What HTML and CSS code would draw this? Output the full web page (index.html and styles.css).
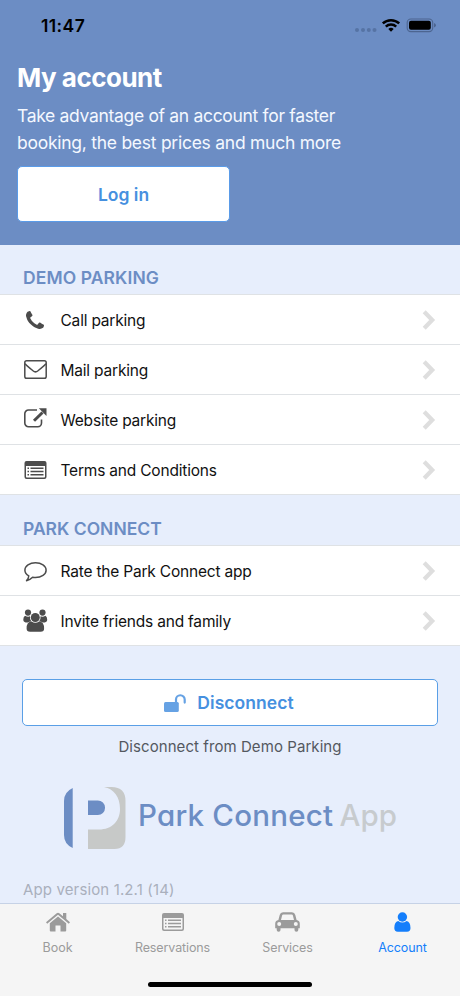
FILE: index.html
```html
<!DOCTYPE html>
<html lang="en">
<head>
<meta charset="utf-8">
<title>My account</title>
<link rel="stylesheet" href="styles.css">
</head>
<body>
<svg width="0" height="0" class="defs">
  <defs>
    <symbol id="chevron" viewBox="0 0 14 20"><path d="M2.200 1.800l8 8.200-8 8.200" fill="none" stroke="currentColor" stroke-width="4.200"/></symbol>
    <symbol id="list" viewBox="0 0 22 18"><path fill="currentColor" fill-rule="evenodd" d="M2 0h18a2 2 0 0 1 2 2v14a2 2 0 0 1-2 2H2a2 2 0 0 1-2-2V2a2 2 0 0 1 2-2zM1.500 5v10.700q0 .8.800.8h17.400q.8 0 .8-.8V5z"/><path d="M3 7.300h1.500M3 10.500h1.500M3 13.700h1.500M6 7.300h13M6 10.500h13M6 13.700h13" stroke="currentColor" stroke-width="1.500"/></symbol>
  </defs>
</svg>
<div class="screen">
  <header class="hero">
    <div class="status">
      <span class="time">11:47</span>
      <svg class="indicators" width="84" height="18" viewBox="0 0 84 18">
        <g fill="#5673a4"><circle cx="3" cy="13" r="2"/><circle cx="9" cy="13" r="2"/><circle cx="14.800" cy="13" r="2"/><circle cx="20.500" cy="13" r="2"/></g>
        <g fill="none" stroke="#000" stroke-width="2.500"><path d="M28.800 6.400a12 12 0 0 1 16.400 0"/><path d="M31.800 9.600a7.600 7.600 0 0 1 10.400 0"/></g>
        <path d="M37 14.800l-2.700-2.700a3.900 3.900 0 0 1 5.400 0z"/>
        <rect x="53.200" y="2" width="25.500" height="12.600" rx="3.600" fill="none" stroke="#4c6590" stroke-width="1.100"/>
        <rect x="55" y="3.800" width="21.800" height="9" rx="2"/>
        <path d="M80 6q2 .8 2 2.300t-2 2.300z" fill="#4c6590"/>
      </svg>
    </div>
    <h1>My account</h1>
    <p class="intro"><span class="l1">Take advantage of an account for faster</span><br><span class="l2">booking, the best prices and much more</span></p>
    <a class="login">Log in</a>
  </header>
  <main>
    <h2>DEMO PARKING</h2>
    <ul>
      <li><span class="ico phone"><svg width="18" height="18" viewBox="0 128 1408 1408"><path fill="currentColor" d="M1408 1240q0 27-10 70.500t-21 68.500q-21 50-122 106-94 51-186 51-27 0-53-3.500t-57.500-12.500-47-14.500-55.500-20.500-49-18q-98-35-175-83-127-79-264-216t-216-264q-48-77-83-175-3-9-18-49t-20.500-55.500-14.500-47-12.500-57.500-3.500-53q0-92 51-186 56-101 106-122 25-11 68.500-21t70.500-10q14 0 21 3 18 6 53 76 11 19 30 54t35 63.500 31 53.500q3 4 17.500 25t21.500 35.500 7 28.500q0 20-28.500 50t-62 55-62 53-28.500 46q0 9 5 22.500t8.500 20.500 14 24 11.500 19q76 137 174 235t235 174q2 1 19 11.500t24 14 20.500 8.500 22.500 5q18 0 46-28.500t53-62 55-62 50-28.500q14 0 28.500 7t35.500 21.500 25 17.500q25 15 53.500 31t63.500 35 54 30q70 35 76 53 3 7 3 21z"/></svg></span><span class="t">Call parking</span><svg class="chev"><use href="#chevron"/></svg></li>
      <li><span class="ico"><svg width="23" height="19" viewBox="0 0 23 19" fill="none" stroke="currentColor" stroke-width="1.500"><rect x=".8" y=".8" width="21.400" height="17.400" rx="1.800"/><path d="M1 3.800c2.500 3 5.500 4.700 8 7q2.500 2.200 5 0c2.500-2.300 5.500-4 8-7"/></svg></span><span class="t">Mail parking</span><svg class="chev"><use href="#chevron"/></svg></li>
      <li><span class="ico up"><svg width="23" height="20" viewBox="0 0 23 20"><path d="M13 2H4.500A3.700 3.700 0 0 0 .8 5.700v9.300a3.700 3.700 0 0 0 3.700 3.700h9.300a3.700 3.700 0 0 0 3.700-3.700v-3.500" fill="none" stroke="currentColor" stroke-width="1.600"/><path d="M10 12.800L18.500 4.500" stroke="currentColor" stroke-width="3"/><path d="M14.800.2h7.700v7.700z" fill="currentColor"/></svg></span><span class="t">Website parking</span><svg class="chev"><use href="#chevron"/></svg></li>
      <li><span class="ico"><svg width="23" height="18"><use href="#list"/></svg></span><span class="t">Terms and Conditions</span><svg class="chev"><use href="#chevron"/></svg></li>
    </ul>
    <h2 class="second">PARK CONNECT</h2>
    <ul>
      <li><span class="ico down"><svg width="23" height="20" viewBox="0 0 23 20"><path d="M11.500.8c5.900 0 10.600 3.300 10.600 7.400s-4.700 7.400-10.600 7.400q-1.500 0-2.900-.3Q6 18 2.500 18.700q2.200-2 2.300-4.900C2.400 12.500.9 10.500.9 8.200.9 4.100 5.600.8 11.500.8z" fill="none" stroke="currentColor" stroke-width="1.500" stroke-linejoin="round"/></svg></span><span class="t">Rate the Park Connect app</span><svg class="chev"><use href="#chevron"/></svg></li>
      <li><span class="ico"><svg width="25" height="23" viewBox="0 0 25 23" fill="currentColor"><circle cx="5" cy="3.600" r="3.100"/><circle cx="19.500" cy="3.600" r="3.100"/><path d="M2 6.700q3 1.600 5 .5-.5 3.200 1.400 5.200-2.400 0-3.400 1H2.700Q.3 13.300.3 10.600q0-3 1.700-3.900zM22.500 6.700q-3 1.600-5 .5.500 3.200-1.400 5.200 2.400 0 3.400 1h2.300q2.400-.1 2.400-2.800 0-3-1.700-3.900z"/><circle cx="12.300" cy="8.500" r="4.500"/><path d="M8.500 12.500q3.800 2.700 7.600 0 5 .2 5 7 0 3.300-3.500 3.300H7.100q-3.500 0-3.500-3.300 0-6.800 4.900-7z"/></svg></span><span class="t">Invite friends and family</span><svg class="chev"><use href="#chevron"/></svg></li>
    </ul>
    <a class="disconnect"><svg width="22" height="18" viewBox="0 0 22 18"><rect x="0" y="8" width="14.800" height="10" rx="1.500" fill="#66a2e4"/><path d="M12 8.500V5.600a4.300 4.300 0 0 1 8.700 0v3" fill="none" stroke="#66a2e4" stroke-width="2.200" stroke-linecap="round"/></svg><span>Disconnect</span></a>
    <p class="note"><span>Disconnect from Demo Parking</span></p>
    <svg class="logo" width="336" height="64" viewBox="0 0 336 64">
      <path fill="#6c8dc4" d="M8.700 1v60Q0 57 0 48V14Q0 5 8.700 1zM24 13.500h9.800a7.250 7.250 0 0 1 0 14.500H24z"/>
      <path fill="#c7c9c8" d="M40 0h7.500q14 0 14 14v36q0 12-11 12H24V42.500h11c13 0 21-8.500 21-20.500S50 2 40 0z"/>
      <text x="74" y="39.300" textLength="195" fill="#6c8dc4">Park Connect</text>
      <text x="275.500" y="39.300" textLength="57.500" fill="#c7cbce">App</text>
    </svg>
    <p class="version"><span>App version 1.2.1 (14)</span></p>
  </main>
  <nav>
    <a><svg width="24" height="20" viewBox="0 0 24 20" fill="currentColor"><path d="M0 10.300L10.700 1.200q1.300-1 2.600 0L17 4.300V1h3.300v6l3.700 3.300-1.200 1.400L12 2.800 1.200 11.700z"/><path d="M12 4.400l8.200 6.800v7.300q0 1-1 1h-4.700v-6h-5v6H4.800q-1 0-1-1v-7.300z"/></svg><span>Book</span></a>
    <a><svg width="22" height="18"><use href="#list"/></svg><span class="res">Reservations</span></a>
    <a><svg width="25" height="20" viewBox="0 0 25 20"><path fill="currentColor" fill-rule="evenodd" d="M8 .3h9q2.600 0 3.300 2.600l1.300 5.200q3.200.6 3.200 3.700v4.500h-1.500V18q0 1.800-1.900 1.800T19.500 18v-1.700h-14V18q0 1.800-1.900 1.800T1.700 18v-1.700H.2v-4.500q0-3.100 3.200-3.700l1.300-5.200Q5.400.3 8 .3zm.2 2.200q-.9 0-1.100.9L6 8h13l-1.100-4.600q-.2-.9-1.100-.9zM4.200 10a2 2 0 1 0 0 4 2 2 0 0 0 0-4zm16.600 0a2 2 0 1 0 0 4 2 2 0 0 0 0-4z"/></svg><span class="serv">Services</span></a>
    <a class="active"><svg width="17" height="20" viewBox="0 0 17 20" fill="currentColor"><circle cx="8.400" cy="5" r="4.700"/><path d="M4.200 8.900q4.200 3.300 8.400 0 3.900.7 3.900 7.100 0 3.700-3.500 3.700H3.800Q.3 19.700.3 16q0-6.400 3.900-7.100z"/></svg><span class="acc">Account</span></a>
    <div class="home"></div>
  </nav>
</div>
</body>
</html>
```

FILE: styles.css
```css
* { box-sizing: border-box; }
body { margin: 0; font-family: Inter, sans-serif; color: #111; }
.defs { position: absolute; }
.screen { width: 460px; height: 996px; display: flex; flex-direction: column; background: #e7eefc; overflow: hidden; }
svg { flex: none; display: block; }
h1, h2, p, ul { margin: 0; padding: 0; }
span { white-space: nowrap; }
.hero { height: 245px; background: #6c8dc4; padding: 0 17px; color: #f4f8ff; }
.status { height: 51px; padding: 0 5px 0 24px; display: flex; align-items: center; justify-content: space-between; color: #000; }
.time { font-size: 17.500px; font-weight: 600; letter-spacing: .4px; }
h1 { font-size: 26px; line-height: 32px; margin-top: 11px; font-weight: 700; letter-spacing: -.5px; color: #fff; }
.intro { font-size: 17.500px; line-height: 27px; margin-top: 8px; }
.l1 { letter-spacing: -.32px; }
.l2 { letter-spacing: -.26px; }
.login { display: flex; align-items: center; justify-content: center; width: 213px; height: 56px; margin-top: 10px; background: #fff; border: 1px solid #5a9be8; border-radius: 5px; color: #4690df; font-size: 17.500px; font-weight: 600; }
main { flex: 1; display: flex; flex-direction: column; }
h2 { height: 49px; padding: 22px 23px 0; font-size: 17.500px; line-height: 22px; font-weight: 600; letter-spacing: .1px; color: #6c8dc4; }
h2.second { height: 50px; padding-top: 23px; letter-spacing: 0; }
ul { list-style: none; border-top: 1px solid #dfe2e5; background: #fff; }
li { height: 50px; border-bottom: 1px solid #dfe2e5; display: flex; align-items: center; padding-right: 24px; }
.ico { width: 60px; padding-left: 11px; display: flex; justify-content: center; color: #4c4c4c; }
.phone { padding-left: 9px; }
.up { padding-bottom: 3px; }
.down { padding-top: 3px; }
.t { flex: 1; font-size: 15.500px; letter-spacing: -.2px; padding: 2px 0 0 .5px; }
.chev { width: 14px; height: 20px; color: #dedede; }
.disconnect { margin: 33px 22px 0; height: 47px; background: #fff; border: 1px solid #5a9fe6; border-radius: 5px; display: flex; align-items: center; justify-content: center; gap: 11px; color: #4690df; font-size: 17.500px; font-weight: 600; letter-spacing: .05px; padding-right: 2px; }
.note { font-size: 15px; line-height: 20px; margin-top: 11px; text-align: center; letter-spacing: .07px; color: #54585f; }
.logo { margin: 30px 0 0 64px; }
.logo text { font-family: Inter, sans-serif; font-size: 29.500px; font-weight: 500; font-feature-settings: "cv11"; }
.version { margin: 29px 23px 0; font-size: 15px; line-height: 20px; letter-spacing: .13px; color: #aab0bd; }
nav { height: 93px; border-top: 1px solid #c6d2e6; background: #f5f5f5; display: grid; grid-template-columns: repeat(4, 115px); grid-template-rows: 79px 6px; color: #9b9b9b; }
nav a { display: flex; flex-direction: column; align-items: center; padding-top: 8px; font-size: 12.500px; }
nav a svg { height: 20px; }
nav a span { margin-top: 8px; line-height: 16px; }
.res, .serv, .acc { letter-spacing: -.12px; }
nav .active { color: #147efb; }
.home { grid-column: 1 / -1; justify-self: center; width: 164px; height: 5px; border-radius: 3px; background: #000; margin-top: -1px; }
```
